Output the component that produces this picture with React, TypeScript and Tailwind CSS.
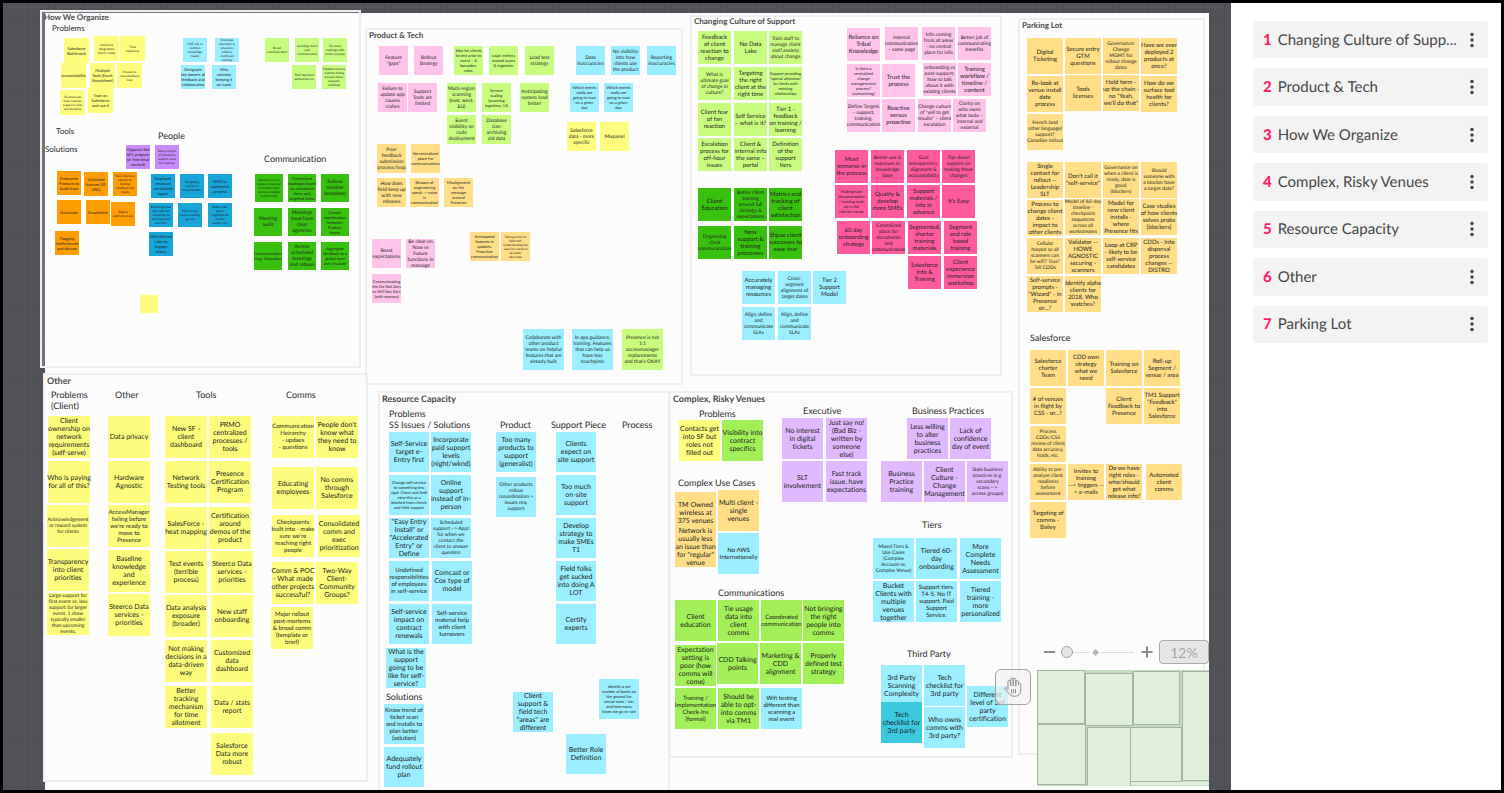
import { useState } from 'react'
import clsx from 'clsx'

type Color = 'yellow' | 'cyan' | 'lime' | 'purple' | 'orange' | 'blue' | 'green' | 'pink' | 'apricot' | 'hotpink' | 'grass' | 'lavender' | 'teal'

// [x, y, text size, text]
type Note = [number, number, number, string]

interface NoteGroup {
  color: Color;
  size: number;
  notes: Note[];
}

interface Frame {
  title: string;
  titleClass: string;
  box: [number, number, number, number];
  titleAt: [number, number];
  labels: Note[];
  groups: NoteGroup[];
}

// Where the white sheet starts on the canvas
const ORIGIN = { x: 45, y: 13 }

const COLORS: Record<Color, string> = {
  yellow: 'bg-[#fdfc7c]',
  cyan: 'bg-[#9beeff]',
  lime: 'bg-[#c8fc7f]',
  purple: 'bg-[#c98afc]',
  orange: 'bg-[#ff9e02]',
  blue: 'bg-[#18a5da]',
  green: 'bg-[#38c20f]',
  pink: 'bg-[#ffc2ea]',
  apricot: 'bg-[#ffde87]',
  hotpink: 'bg-[#ff5a9e]',
  grass: 'bg-[#a1f058]',
  lavender: 'bg-[#e1b9ff]',
  teal: 'bg-[#3bc9df]',
}

const TEXT: Record<number, string> = {
  3: 'text-[3px] leading-[4px]',
  4: 'text-[4px] leading-[5px]',
  5: 'text-[5px] leading-[6px]',
  6: 'text-[6px] leading-[7px]',
  7: 'text-[7px] leading-[8px]',
  8: 'text-[8px] leading-[11px]',
  9: 'text-[9px] leading-[11px]',
}

const FRAMES: Frame[] = [
  {
    title: 'How We Organize',
    titleClass: 'text-[8px] leading-[10px]',
    box: [40, 10, 321, 358],
    titleAt: [44, 12],
    labels: [
      [52, 23, 8, 'Problems'],
      [56, 126, 8, 'Tools'],
      [158, 130, 9, 'People'],
      [45, 144, 8, 'Solutions'],
      [264, 153, 9, 'Communication'],
    ],
    groups: [
      { color: 'yellow', size: 25, notes: [
        [64, 38, 4, 'Salesforce\nBottleneck'],
        [94, 36, 3, 'Salesforce\nIntegrations\n(Norris, Stats)'],
        [120, 36, 3, 'Trust\nSalesforce'],
        [61, 63, 4, 'Accountability'],
        [90, 63, 4, 'Multiple\nTools (Excel,\nSmartsheet)'],
        [117, 63, 3, 'Process to\nclose feedback\nloop'],
        [60, 90, 3, 'ID where we\nhave overlaps\n& gaps in roles\nand decisions'],
        [88, 88, 4, 'Train on\nSalesforce\nand use it'],
      ] },
      { color: 'cyan', size: 24, notes: [
        [183, 38, 3, 'SME role vs\ncommon\nknowledge\nneeds'],
        [215, 38, 3, 'Employee\neducation &\neducators\n(rebid &\ncontinued\ntraining)'],
        [181, 65, 4, 'Designate\nkey owners of\nfeedback and\ncollaboration'],
        [212, 65, 4, 'Who\ncontrols\nkeeping it\non track'],
      ] },
      { color: 'lime', size: 24, notes: [
        [265, 38, 3, 'Broad\ncommunication'],
        [295, 38, 3, "Learnings aren't\nwell\ncommunicated"],
        [323, 38, 3, 'Too many\nmeetings with\nsimilar purpose'],
        [292, 65, 3, '"Fast" decisions\nwithout buy-in'],
        [322, 65, 3, 'Feedback took &\nvisibility/timing\n(known status,\nrequests,\nroadmap)'],
      ] },
      { color: 'purple', size: 24, notes: [
        [126, 145, 4, 'Organize like\nNFL program\n(or find what\nworked)'],
        [155, 145, 3, 'Deep analysis\nof Salesforce\nsupport cases\nfor roadmap'],
      ] },
      { color: 'orange', size: 24, notes: [
        [57, 171, 4, 'Enterprise\nProducts to\nbuild trust'],
        [84, 172, 4, 'Unlimited\nlicenses (SF,\nJIRA)'],
        [113, 172, 3, 'Slack Channels\nspecific to\ntraining\nfeedback and\nneeds'],
        [57, 200, 4, 'Automate'],
        [86, 200, 4, 'Smartsheet'],
        [111, 202, 3, 'Reduce\nplatforms/tools'],
        [55, 231, 4, 'Flagging\ninefficiencies\nand discuss'],
      ] },
      { color: 'blue', size: 24, notes: [
        [151, 174, 4, 'Employee\nresource\ncentralized\nspace'],
        [180, 174, 3, 'Navigating\noverlap in\nresponsibilities'],
        [208, 174, 4, 'PMO to\nimplement\nprocess'],
        [149, 203, 3, 'Build large flow\nwith who has\nownership at\neach phase for\neach tier'],
        [178, 203, 3, 'RACI for key\nteams/working\ngroups'],
        [208, 203, 3, 'Better V&P\ngroup\nsegments (all\ncomps,\ncomms, etc)'],
        [149, 232, 4, 'Well defined\nrules to\nengage\nteams'],
      ] },
      { color: 'green', size: 28, notes: [
        [255, 174, 3, 'Maintain known\nissues & expected\nfix timeline that\ncan be circulated\nto CSS/COD'],
        [288, 174, 4, 'Centralized\nroadmaps based\non scheduled\nitems and\ntargeted items'],
        [321, 174, 5, 'Rollout\ntimeline\n(template)'],
        [254, 208, 5, 'Meeting\naudit'],
        [288, 208, 5, 'Meetings\nmust have\nclear\nagencies'],
        [321, 208, 4, 'Greater\ncoordination\nbetween\nProduct\nteams'],
        [254, 242, 4, 'Communication\nHug/ Education'],
        [288, 242, 5, 'Access\nscheduled\nmeetings\nand rebase'],
        [321, 242, 4, 'Aggregate\nfeedback to a\nglobal level\nand circulate'],
      ] },
      { color: 'yellow', size: 18, notes: [[140, 295, 4, '']] },
    ],
  },
  {
    title: 'Product & Tech',
    titleClass: 'text-[8px] leading-[10px]',
    box: [365, 28, 318, 357],
    titleAt: [369, 30],
    labels: [],
    groups: [
      { color: 'pink', size: 29, notes: [
        [379, 46, 5, 'Feature\n"gaps"'],
        [414, 46, 5, 'Rollout\nStrategy'],
        [378, 83, 5, 'Failure to\nupdate app\ncauses\ncrahes'],
        [408, 83, 5, 'Support\nTools are\nlimited'],
        [372, 239, 5, 'Reset\nexpectations'],
        [406, 239, 5, 'Be clear on\nNow vs\nFuture\nfunctions in\nmessage'],
        [372, 274, 4, "Communicating\nthe Do Not Do's\nor Will Not Do's\n(with reasons)"],
      ] },
      { color: 'lime', size: 29, notes: [
        [454, 46, 4, 'Way for clients\nto test prior to\nevent – #\nbarcodes,\nrules,'],
        [489, 46, 4, 'Load: metrics\naround scans\n& ingestion'],
        [525, 46, 5, 'Load test\nstrategy'],
        [447, 83, 5, 'Multi-region\nscanning\n(east, west,\nEU)'],
        [482, 83, 4, 'Service\nscaling\n(scanning\ningestion, UI)'],
        [520, 83, 5, 'Anticipating\nsystem load\nbetter'],
        [447, 115, 5, 'Event\nvisibility on\ncode\ndeployment'],
        [482, 115, 5, 'Database\nsize:\narchiving\nold data'],
      ] },
      { color: 'cyan', size: 29, notes: [
        [576, 46, 5, 'Data\ninaccuracies'],
        [611, 46, 5, 'No visibility\ninto how\nclients use\nthe product'],
        [647, 46, 5, 'Reporting\ninaccuracies'],
        [570, 83, 4, 'Which events\nreally are\ngoing to scan\non a given\nday'],
        [604, 83, 4, 'Which events\nreally are\ngoing to scan\non a given\nday'],
      ] },
      { color: 'yellow', size: 29, notes: [
        [567, 122, 5, 'Salesforce\ndata - more\nspecific'],
        [600, 122, 5, 'Mixpanel'],
      ] },
      { color: 'apricot', size: 29, notes: [
        [377, 144, 5, 'Poor\nfeedback\nsubmission\nprocess/loop'],
        [411, 144, 4, 'No centralized\nplace fro\ncommunications'],
        [377, 178, 5, 'How does\nfield keep up\nwith new\nreleases'],
        [410, 178, 4, 'Beware of\nengeneering\nspeak -> noise\nin\ncommunication'],
        [444, 178, 4, 'Misalignment\non the\nmessage\naround\nPresence'],
        [470, 232, 4, 'Anticipated\nfeatures in\nupdates.\nProactive\ncommunication'],
        [501, 232, 3, 'Talking points for\nfield staff.\nUnderstanding the\nvalue for clients to\nbe better\nadvocates'],
      ] },
      { color: 'cyan', size: 41, notes: [
        [523, 329, 5, 'Collaborate with\nother product\nteams on helpful\nfeatures that are\nalready built'],
        [572, 329, 5, 'In app guidance,\ntraining. Features\nthat can help us\nhave less\ntouchpints'],
      ] },
      { color: 'lime', size: 41, notes: [
        [622, 329, 5, "Presence is not\n1:1\naccessmanager\nreplacements\nand that's OKAY"],
      ] },
    ],
  },
  {
    title: 'Changing Culture of Support',
    titleClass: 'text-[8px] leading-[10px]',
    box: [690, 15, 312, 361],
    titleAt: [694, 16],
    labels: [],
    groups: [
      { color: 'lime', size: 33, notes: [
        [698, 31, 6, 'Feedback\nof client\nreaction to\nchange'],
        [734, 31, 6, 'No Data\nLake'],
        [769, 31, 5, 'Train staff to\nmanage client\nstaff anxiety\nabout change'],
        [698, 67, 5, 'What is\nultimate goal\nof change in\nculture?'],
        [734, 67, 6, 'Targeting\nthe right\nclient at the\nright time'],
        [769, 67, 4, 'Support providing\n"special attention"\nto clients with\nexisting\nrelationships'],
        [698, 103, 6, 'Client fear\nof fan\nreaction'],
        [734, 103, 6, 'Self Service\n– what is it?'],
        [769, 103, 6, 'Tier 1 -\nfeedback\non training /\nlearning'],
        [698, 138, 6, 'Escalation\nprocess for\noff-hour\nissues'],
        [734, 138, 6, 'Client &\ninternal info\nthe same –\nportal'],
        [769, 138, 6, 'Definition\nof the\nsupport\ntiers'],
      ] },
      { color: 'green', size: 33, notes: [
        [698, 188, 6, 'Client\nEducation'],
        [734, 188, 5, 'Better client\ntraining\naround full\nstrategy &\nexpectations'],
        [769, 188, 6, 'Metrics and\ntracking of\nclient\nsatisfaction'],
        [698, 226, 5, 'Organizing\nclient\ncommunication'],
        [734, 226, 6, 'New\nsupport &\ntraining\nprocesses'],
        [769, 226, 6, 'Shpae client\nsuccesses to\nease fear'],
      ] },
      { color: 'pink', size: 33, notes: [
        [847, 28, 6, 'Reliance on\nTribal\nKnowledge'],
        [885, 27, 5, 'Internal\ncommunication\n– same page'],
        [922, 27, 5, 'Info coming\nfrom all areas\n- no central\nplace for info'],
        [958, 27, 5, 'Better job of\ncommunicating\nbenefits'],
        [847, 64, 4, 'Is there a\ncentralized\nchange\nmanagemnent\nprocess?\n(overarching)'],
        [882, 64, 6, 'Trust the\nprocess'],
        [923, 63, 5, 'onboarding vs\npost-support;\nhow to talk\nabout it with\nexisting clients'],
        [958, 63, 6, 'Training\nworkflow /\ntimeline /\ncontent'],
        [847, 99, 5, 'Define Targets\n– support,\ntraining,\ncommunication'],
        [882, 99, 6, 'Reactive\nversus\nproactive'],
        [918, 99, 5, 'Change culture\nof "yell to get\nresults" – client\nescalation'],
        [953, 99, 5, 'Clarity on\nwho owns\nwhat tasks –\ninternal and\nexternal'],
      ] },
      { color: 'hotpink', size: 33, notes: [
        [835, 150, 6, 'Must\nimmerse in\nthe process'],
        [871, 150, 5, 'Better use &\nexposure to\nknowledge\nbase'],
        [907, 150, 5, 'Goal\ntransparency,\nalignment &\naccountability'],
        [942, 150, 5, 'Top-down\nsupport on\nmaking these\nchanges'],
        [835, 185, 4, 'Making sure\ndocumentation\n/ training ends\nup in the\ncliensts hands'],
        [871, 185, 6, 'Qualify &\ndevelop\nmore SMEs'],
        [907, 185, 6, 'Support\nmaterials /\ninfo in\nadvance'],
        [942, 185, 6, "It's Easy"],
        [837, 221, 6, '60 day\nonboarding\nstrategy'],
        [872, 221, 5, 'Centralized\nplace for\ndocuments\nand\ncommunication'],
        [908, 221, 6, 'Segmented,\nshorter\ntraining\nmaterials'],
        [944, 221, 6, 'Segment\nand role\nbased\ntraining'],
        [908, 256, 6, 'Salesforce\nInfo &\nTraining'],
        [944, 256, 6, 'Client\nexperience\nimmersion\nworkshop'],
      ] },
      { color: 'cyan', size: 33, notes: [
        [742, 271, 6, 'Accurately\nmanaging\nresources'],
        [778, 271, 5, 'Cross-\nsegment\nalignment of\ntarget dates'],
        [813, 271, 6, 'Tier 2\nSupport\nModel'],
        [742, 307, 5, 'Align, define\nand\ncommunicate\nSLAs'],
        [778, 307, 5, 'Align, define\nand\ncommunicate\nSLAs'],
      ] },
    ],
  },
  {
    title: 'Parking Lot',
    titleClass: 'text-[8px] leading-[10px]',
    box: [1018, 18, 187, 737],
    titleAt: [1022, 20],
    labels: [[1030, 332, 9, 'Salesforce']],
    groups: [
      { color: 'apricot', size: 36, notes: [
        [1027, 38, 6, 'Digital\nTicketing'],
        [1065, 38, 6, 'Secure entry\nGTM\nquestions'],
        [1103, 38, 5, 'Governance:\nChange\nMGMT for\nrollout change\ndates'],
        [1141, 38, 6, 'Have we ever\ndeployed 2\nproducts at\nonce?'],
        [1027, 76, 6, 'Re-look at\nvenue install\ndate\nprocess'],
        [1065, 75, 6, 'Tools\nlicenses'],
        [1103, 75, 6, 'Hold form -\nup the chain -\nno "Yeah,\nwe\'ll do that"'],
        [1141, 76, 6, 'How do we\nsurface tool\nhealth for\nclients?'],
        [1027, 114, 5, 'French (and\nother language)\nsupport?\nCanadian rollout'],
        [1027, 162, 6, 'Single\ncontact for\nrollout --\nLeadership\nSLT'],
        [1065, 162, 6, 'Don\'t call it\n"self-service"'],
        [1103, 162, 5, 'Governance on\nwhen a client is\nready, date is\ngood,\n(blockers)'],
        [1141, 162, 5, 'Should\nsomeone with\na blocker have\na target date?'],
        [1027, 200, 6, 'Process to\nchange client\ndates -\nimpact to\nother clients'],
        [1065, 199, 5, 'Model of 60-day\ntimeline -\ncheckpoint\nsequences\nacross all\nworkstreams'],
        [1103, 199, 6, 'Model for\nnew client\ninstalls -\nwhere\nPresence fits'],
        [1141, 199, 6, 'Case studies\nof how clients\nsolves probs\n(blockers)'],
        [1027, 238, 5, 'Cellular\nhospot so all\nscanners can\nbe wifi? True?\nTell CDDs'],
        [1065, 238, 6, 'Validator --\nHOWE\nAGNOSTIC\nsecuring -\nscanners'],
        [1103, 238, 6, 'Loop at CRP\n- likely to be\nself-service\ncandidates'],
        [1141, 238, 6, 'CDDs - Info\ndispersal\nprocess\nchanges --\nDISTRO'],
        [1027, 276, 6, 'Self-service\nprompts -\n"Wizard" - in\nPresence\nor...?'],
        [1065, 276, 6, 'Identify alpha\nclients for\n2018. Who\nwatches?'],
        [1030, 350, 6, 'Salesforce\ncharter\nTeam'],
        [1068, 350, 6, 'CDD own\nstrategy\nwhat we\nneed'],
        [1106, 350, 6, 'Training on\nSalesforce'],
        [1144, 350, 6, 'Roll-up\nSegment /\nvenue / area'],
        [1030, 388, 6, '# of venues\nin flight by\nCSS - or...?'],
        [1106, 388, 6, 'Client\nFeedback to\nPresence'],
        [1144, 388, 6, 'TM1 Support\n"Feedback"\ninto\nSalesforce'],
        [1030, 426, 5, 'Process\nCDDs/CSS\nreview of client\ndata accuracy,\nholds, etc.'],
        [1030, 464, 5, 'Ability to pre-\nanalyze client\nreadiness\nbefore\nassessment'],
        [1068, 464, 6, 'Invites to\ntraining\n--> triggers --\n> e-mails'],
        [1106, 464, 6, 'Do we have\nright roles -\nwho/should\nget what\nrelease info?'],
        [1146, 464, 6, 'Automated\nclient\ncomms'],
        [1030, 502, 6, 'Targeting of\ncomms -\nBailey'],
      ] },
    ],
  },
  {
    title: 'Other',
    titleClass: 'text-[9px] leading-[12px]',
    box: [43, 373, 325, 409],
    titleAt: [47, 375],
    labels: [
      [51, 389, 9, 'Problems\n(Client)'],
      [115, 389, 9, 'Other'],
      [196, 389, 9, 'Tools'],
      [286, 389, 9, 'Comms'],
    ],
    groups: [
      { color: 'yellow', size: 42, notes: [
        [48, 416, 7, 'Client\nownership on\nnetwork\nrequirements\n(self-serve)'],
        [48, 461, 7, 'Who is paying\nfor all of this?'],
        [47, 505, 5, 'Acknowledgement\nor reward system\nfor clients'],
        [47, 549, 7, 'Transparency\ninto client\npriorities'],
        [47, 593, 5, 'Large support for\nfirst event vs. less\nsupport for larger\nevent. 1 show\ntypically smaller\nthan upcoming\nevents.'],
        [108, 416, 7, 'Data privacy'],
        [108, 461, 7, 'Hardware\nAgnostic'],
        [108, 505, 6, "AccessManager\nfailing before\nwe're ready to\nmove to\nPresence"],
        [108, 550, 7, 'Baseline\nknowledge\nand\nexperience'],
        [108, 594, 7, 'Steerco Data\nservices -\npriorities'],
        [165, 416, 7, 'New SF -\nclient\ndashboard'],
        [165, 461, 7, 'Network\nTesting tools'],
        [165, 507, 7, 'SalesForce -\nheat mapping'],
        [165, 551, 7, 'Test events\n(terrible\nprocess)'],
        [165, 595, 7, 'Data analysis\nexposure\n(broader)'],
        [165, 640, 7, 'Not making\ndecisions in a\ndata-driven\nway'],
        [165, 686, 7, 'Better\ntracking\nmechanism\nfor time\nallotment'],
        [209, 416, 7, 'PRMO\ncentralized\nprocesses /\ntools'],
        [209, 461, 7, 'Presence\nCertification\nProgram'],
        [209, 507, 7, 'Certification\naround\ndemos of the\nproduct'],
        [211, 551, 7, 'Steerco Data\nservices -\npriorities'],
        [211, 595, 7, 'New staff\nonboarding'],
        [211, 640, 7, 'Customized\ndata\ndashboard'],
        [211, 686, 7, 'Data / stats\nreport'],
        [211, 733, 7, 'Salesforce\nData more\nrobust'],
        [272, 416, 6, 'Communication\nHeirarchy\n- updaes\n- questions'],
        [316, 416, 7, "People don't\nknow what\nthey need to\nknow"],
        [272, 467, 7, 'Educating\nemployees'],
        [316, 467, 7, 'No comms\nthrough\nSalesforce'],
        [272, 515, 6, "Checkpoints\nbuilt into - make\nsure we're\nreaching right\npeople"],
        [318, 515, 7, 'Consolidated\ncomm and\nexec\nprioritization'],
        [272, 562, 7, 'Comm & POC\n- What made\nother projects\nsuccessful?'],
        [316, 562, 7, 'Two-Way\nClient-\nCommunity\nGroups?'],
        [271, 607, 6, 'Major rollout\npost-mortems\n& broad comm\n(template or\nbrief)'],
      ] },
    ],
  },
  {
    title: 'Resource Capacity',
    titleClass: 'text-[9px] leading-[11px]',
    box: [378, 391, 292, 440],
    titleAt: [382, 393],
    labels: [
      [389, 408, 9, 'Problems\nSS Issues / Solutions'],
      [500, 419, 9, 'Product'],
      [551, 419, 9, 'Support Piece'],
      [622, 419, 9, 'Process'],
      [386, 691, 9, 'Solutions'],
    ],
    groups: [
      { color: 'cyan', size: 40, notes: [
        [389, 432, 7, 'Self-Service\ntarget e-\nEntry first'],
        [389, 475, 4, 'Change self-service\nto something less\nrigid. Client and field\nview this as a\nblocked from clients\nand field support'],
        [389, 518, 7, '"Easy Entry\nInstall" or\n"Accelerated\nEntry" or\nDefine'],
        [389, 561, 6, 'Undefined\nresponsibilities\nof employees\nin self-service'],
        [389, 604, 7, 'Self-service\nimpact on\ncontract\nrenewals'],
        [386, 648, 7, 'What is the\nsupport\ngoing to be\nlike for self-\nservice?'],
        [384, 704, 6, 'Know trend of\nticket scan\nand installs to\nplan better\n(solution)'],
        [384, 747, 7, 'Adequately\nfund rollout\nplan'],
        [431, 432, 7, 'Incorporate\npaid supoprt\nlevels\n(night/wknd)'],
        [431, 475, 7, 'Online\nsupport\ninstead of in-\nperson'],
        [431, 518, 5, 'Scheduled\nsupport –> Appt\nfor when we\ncontact the\nclient to answer\nquestion'],
        [432, 561, 7, 'Comcast or\nCox type of\nmodel'],
        [432, 604, 6, 'Self-service\nmaterial help\nwith client\nturnovers'],
        [496, 432, 7, 'Too many\nproducts to\nsupport\n(generalist)'],
        [496, 477, 5, 'Other products\nrollout\ncooordination +\nissues req.\nsupport'],
        [556, 432, 7, 'Clients\nexpect on\nsite support'],
        [556, 475, 7, 'Too much\non-site\nsupport'],
        [556, 518, 7, 'Develop\nstrategy to\nmake SMEs\nT1'],
        [556, 561, 7, 'Field folks\nget sucked\ninto doing A\nLOT'],
        [556, 604, 7, 'Certify\nexperts'],
        [513, 692, 7, 'Client\nsupport &\nfield tech\n"areas" are\ndifferent'],
        [599, 679, 4, 'Identify a set\nnumber of boots on\nthe ground for\nvenue sizes / tier\nand how many\ntimes we go on site'],
        [566, 734, 7, 'Better Role\nDefinition'],
      ] },
    ],
  },
  {
    title: 'Complex, Risky Venues',
    titleClass: 'text-[9px] leading-[11px]',
    box: [669, 391, 344, 367],
    titleAt: [673, 393],
    labels: [
      [699, 408, 9, 'Problems'],
      [803, 405, 9, 'Executive'],
      [912, 405, 9, 'Business Practices'],
      [678, 477, 9, 'Complex Use Cases'],
      [922, 519, 9, 'Tiers'],
      [718, 587, 9, 'Communications'],
      [907, 648, 9, 'Third Party'],
    ],
    groups: [
      { color: 'yellow', size: 41, notes: [[679, 420, 7, 'Contacts get\ninto SF but\nroles not\nfilled out']] },
      { color: 'grass', size: 41, notes: [
        [722, 420, 7, 'Visibility into\ncontract\nspecifics'],
        [675, 600, 7, 'Client\neducation'],
        [718, 600, 7, 'Tie usage\ndata into\nclient\ncomms'],
        [761, 600, 6, 'Coordinated\ncommunication'],
        [803, 600, 7, 'Not bringing\nthe right\npeople into\ncomms'],
        [675, 645, 7, 'Expectation\nsetting is\npoor (how\ncomms will\ncome)'],
        [717, 643, 7, 'CDD Talking\npoints'],
        [760, 643, 7, 'Marketing &\nCDD\nalignment'],
        [803, 643, 7, 'Properly\ndefined test\nstrategy'],
        [675, 688, 6, 'Training /\nImplementation\nCheck-Ins\n(formal)'],
        [718, 688, 7, 'Should be\nable to opt-\ninto comms\nvia TM1'],
      ] },
      { color: 'lavender', size: 41, notes: [
        [782, 418, 7, 'No interest\nin digital\ntickets'],
        [826, 418, 7, 'Just say no!\n(Bad Biz -\nwritten by\nsomeone\nelse)'],
        [782, 461, 7, 'SLT\ninvolvement'],
        [826, 461, 7, 'Fast track\nissue, have\nexpectations'],
        [907, 418, 7, 'Less willing\nto alter\nbusiness\npractices'],
        [950, 418, 7, 'Lack of\nconfidence\nday of event'],
        [881, 461, 7, 'Business\nPractice\ntraining'],
        [924, 461, 7, 'Client\nCulture -\nChange\nManagement'],
        [967, 461, 5, 'Stale business\npractices (e.g.\nsecondary\nscans -->\naccess groups)'],
      ] },
      { color: 'apricot', size: 41, notes: [
        [675, 492, 7, 'TM Owned\nwireless at\n375 venues'],
        [675, 526, 7, 'Network is\nusually less\nan issue than\nfor "regular"\nvenue'],
        [718, 490, 7, 'Multi client -\nsingle\nvenues'],
      ] },
      { color: 'cyan', size: 41, notes: [
        [718, 533, 6, 'No AWS\nInternationally'],
        [761, 688, 6, 'Wifi testing\ndifferent than\nscanning a\nreal event'],
        [873, 538, 5, 'Mixed Tiers &\nUse Cases\n(Complex\nAccount vs.\nComplex Venue)'],
        [916, 538, 7, 'Tiered 60-\nday\nonboarding'],
        [960, 538, 7, 'More\nComplete\nNeeds\nAssessment'],
        [873, 581, 7, 'Bucket\nClients with\nmultiple\nvenues\ntogether'],
        [916, 581, 6, 'Support tiers.\nT4-5, No IT\nsupport. Paid\nSupport\nService.'],
        [960, 581, 7, 'Tiered\ntraining -\nmore\npersonalized'],
        [881, 665, 7, '3rd Party\nScanning\nComplexity'],
        [924, 665, 7, 'Tech\nchecklist for\n3rd party'],
        [924, 707, 7, 'Who owns\ncomms with\n3rd party?'],
        [967, 686, 7, 'Different\nlevel of 3rd\nparty\ncertification'],
      ] },
      { color: 'teal', size: 41, notes: [[881, 702, 7, 'Tech\nchecklist for\n3rd party']] },
    ],
  },
]

const OUTLINE = [
  'Changing Culture of Supp...',
  'Product & Tech',
  'How We Organize',
  'Complex, Risky Venues',
  'Resource Capacity',
  'Other',
  'Parking Lot',
]

const place = (x: number, y: number) => ({ left: x - ORIGIN.x, top: y - ORIGIN.y })

function StickyNote({ note, color, size }: { note: Note, color: Color, size: number }) {
  const [x, y, text, body] = note
  return (
    <p
      className={clsx('absolute grid place-content-center whitespace-pre text-center text-[#1c1c1c]', COLORS[color], TEXT[text])}
      style={{ ...place(x, y), width: size, height: size }}
    >
      {body}
    </p>
  )
}

function BoardFrame({ frame }: { frame: Frame }) {
  const [x, y, width, height] = frame.box
  return (
    <section aria-label={frame.title}>
      <div className="absolute border-2 border-[#eeeeee] bg-white/20" style={{ ...place(x, y), width, height }} />
      <h2
        className={clsx('absolute whitespace-pre font-bold text-[#4a4a4a]', frame.titleClass)}
        style={place(frame.titleAt[0], frame.titleAt[1])}
      >
        {frame.title}
      </h2>
      {frame.labels.map(([lx, ly, text, body]) => (
        <h3 key={body} className={clsx('absolute whitespace-pre text-[#2b2b2b]', TEXT[text])} style={place(lx, ly)}>
          {body}
        </h3>
      ))}
      {frame.groups.map((group, i) =>
        group.notes.map((note) => (
          <StickyNote key={`${i}-${note[0]}-${note[1]}`} note={note} color={group.color} size={group.size} />
        ))
      )}
    </section>
  )
}

function HandIcon() {
  return (
    <svg width="20" height="22" viewBox="0 0 20 22" fill="none" stroke="#8f8f8f" strokeLinecap="round" strokeLinejoin="round">
      <path d="M5 13V5.500a1.300 1.300 0 0 1 2.600 0V10V3.300a1.300 1.300 0 0 1 2.600 0V10V3.700a1.300 1.300 0 0 1 2.600 0V10.400V5.900a1.300 1.300 0 0 1 2.600 0V9V8.600a1.200 1.200 0 0 1 2.400 0V14c0 4-2.600 6.300-6.400 6.300c-3 0-4.600-1.300-5.800-3.500L1.800 13.400c-.7-1.400 1-2.300 2-1.300L5 13.500" />
      <path d="M8.500 13.500v3.500M10.500 13.500v3.500M12.500 13.500v3.500" />
    </svg>
  )
}

function MiniMap() {
  return (
    <svg className="block h-[116px] w-[172px]" viewBox="0 0 172 116">
      <rect width="172" height="116" fill="#bcd3ba" fillOpacity="0.85" />
      <g fill="#e1f0dc" fillOpacity="0.94" stroke="#a3b5a1">
        <rect x="0.500" y="0.500" width="47" height="53" />
        <rect x="48.500" y="3.500" width="47" height="52" />
        <rect x="96.500" y="1.500" width="46" height="53" />
        <rect x="145.500" y="1.500" width="30" height="109" />
        <rect x="0.500" y="54.500" width="48" height="60" />
        <rect x="50.500" y="57.500" width="43" height="62" />
        <rect x="93.500" y="57.500" width="51" height="54" />
      </g>
      <path d="M94 113.500H172" stroke="#e1f0dc" strokeWidth="3" />
    </svg>
  )
}

function ZoomControls() {
  const [zoom, setZoom] = useState(12)
  return (
    <div className="flex h-6 items-center">
      <button type="button" aria-label="Zoom out" onClick={() => setZoom(Math.max(12, zoom - 10))} className="h-5 w-3">
        <span className="block h-[2px] w-[11px] bg-[#8c8c8c]" />
      </button>
      <div className="relative ml-[5px] flex w-[73px] items-center">
        <input
          type="range"
          aria-label="Zoom"
          min={12}
          max={400}
          value={zoom}
          onChange={(e) => setZoom(Number(e.target.value))}
          className="h-3 w-full appearance-none bg-transparent [&::-webkit-slider-runnable-track]:h-px [&::-webkit-slider-runnable-track]:bg-[#dcdcdc] [&::-webkit-slider-thumb]:-mt-[6px] [&::-webkit-slider-thumb]:h-3 [&::-webkit-slider-thumb]:w-3 [&::-webkit-slider-thumb]:appearance-none [&::-webkit-slider-thumb]:rounded-full [&::-webkit-slider-thumb]:border [&::-webkit-slider-thumb]:border-[#a3a3a3] [&::-webkit-slider-thumb]:bg-[#e6e6e6]"
        />
        <span className="pointer-events-none absolute left-[29px] bg-[#fcfcfc] px-[3px] py-1">
          <span className="block h-[5px] w-[5px] rotate-45 bg-[#b5b5b5]" />
        </span>
      </div>
      <button type="button" aria-label="Zoom in" onClick={() => setZoom(Math.min(400, zoom + 10))} className="ml-[7px]">
        <svg width="12" height="12" viewBox="0 0 12 12" stroke="#8c8c8c" strokeWidth="2">
          <path d="M6 0.500v11M0.500 6h11" />
        </svg>
      </button>
      <button type="button" className="ml-[6px] h-6 w-[50px] shrink-0 rounded-[4px] border border-[#a9a9a9] bg-[#e6e6e6] text-[14px] text-[#a8a8a8]">
        {zoom}%
      </button>
    </div>
  )
}

export default function App() {
  return (
    <div className="flex h-screen overflow-hidden border-[3px] border-black bg-white font-['Lato',sans-serif] [font-variant-ligatures:none] [text-rendering:geometricPrecision]">
      <main className="flex min-w-0 flex-1 overflow-hidden bg-[#515258] bg-[repeating-linear-gradient(90deg,rgba(255,255,255,0.020)_0_1px,transparent_1px_3px,rgba(0,0,0,0.030)_3px_4px,transparent_4px_7px),repeating-linear-gradient(0deg,rgba(255,255,255,0.020)_0_1px,transparent_1px_4px,rgba(0,0,0,0.030)_4px_5px,transparent_5px_9px)] pl-[42px] pr-[22px] pt-[10px]">
        <div id="board" className="relative flex-1 bg-[#fcfcfc]">
          {FRAMES.map((frame) => (
            <BoardFrame key={frame.title} frame={frame} />
          ))}

          {/* Floating canvas tools */}
          <div className="absolute bottom-1 right-0 flex items-start gap-[6px]">
            <button type="button" aria-label="Pan" className="mt-[29px] grid h-9 w-9 place-items-center rounded-md border border-[#a0a0a0] bg-[#f2f2f2]/70">
              <HandIcon />
            </button>
            <div className="flex w-[172px] flex-col gap-[6px]">
              <div className="self-end">
                <ZoomControls />
              </div>
              <MiniMap />
            </div>
          </div>
        </div>
      </main>

      <aside className="w-[270px] shrink-0 pl-[22px] pr-[13px] pt-[18px]">
        <ol className="grid h-[322px] grid-cols-1 grid-rows-7 gap-[10px]">
          {OUTLINE.map((title, i) => (
            <li key={title} className="flex items-center rounded-[3px] bg-[#f3f3f3] pl-[10px] pr-[8px] text-[15px] leading-5">
              <span className="mr-[6px] font-black text-[#ff1f66]">{i + 1}</span>
              <a href="#board" className="flex-1 whitespace-nowrap text-[#454545]">{title}</a>
              <button type="button" aria-label={`Options for ${title}`} className="grid h-6 w-4 place-items-center">
                <svg width="4" height="16" viewBox="0 0 4 16" fill="#3f3f3f">
                  <circle cx="2" cy="2.500" r="1.700" />
                  <circle cx="2" cy="8" r="1.700" />
                  <circle cx="2" cy="13.500" r="1.700" />
                </svg>
              </button>
            </li>
          ))}
        </ol>
      </aside>
    </div>
  )
}
